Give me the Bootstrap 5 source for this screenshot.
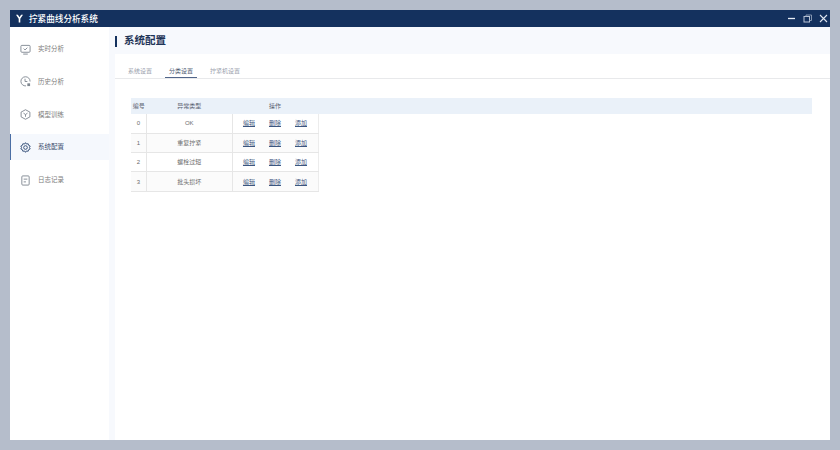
<!DOCTYPE html>
<html lang="zh"><head><meta charset="utf-8"><title>拧紧曲线分析系统</title>
<link rel="stylesheet" href="https://cdn.jsdelivr.net/npm/bootstrap@5.3.0/dist/css/bootstrap.min.css">
<style>
html,body{height:100%}
body{background:#b5bdcb;padding:10px;font-family:"Liberation Sans","Noto Sans CJK SC",sans-serif;overflow:hidden}
.app-win{width:820px;height:430px;background:#fff}
.app-title{height:17px;background:#14315e;color:#fff;font-size:8.6px;font-weight:500;padding:1px 0 0 5px}
.logo-y{margin-right:5px;margin-top:-1px}
.win-btn{width:13px;height:13px;display:block;margin-left:3px;margin-top:-1px}
.app-body{height:413px}
.side{width:99px;flex:none;padding-top:9px;gap:6.75px}
.side-item{height:26px;padding-left:9px;color:#7d7d7d;font-size:6.5px;gap:7px;border-left:1px solid transparent}
.side-item svg{width:11px;height:11px;flex:none;color:#7f8790}
.side-item.on{background:#f5f8fd;border-left-color:#4a6ea4;color:#3c4f70}
.side-item.on svg{color:#2f4a75}
.main-area{background:#f7f9fd;padding-left:6px;min-width:0}
.page-head{height:27px;font-size:10.5px;font-weight:700;color:#1f3558;gap:7px;padding-top:1px}
.head-bar{width:2px;height:11px;background:#14315e}
.panel{background:#fff}
.tabs-row{height:25px;border-bottom:1px solid #e8e9eb;padding-left:9px}
.tab-it{font-size:6px;color:#9aa1ad;padding:11px 4px 0;line-height:12px;height:24px;margin-right:9px;text-decoration:none}
.tab-it.on{color:#4b5870;border-bottom:1px solid #51658a}
.tbl-wrap{padding:19px 19px 0 16px}
.cat-tbl{table-layout:fixed;width:681px;border-collapse:collapse;font-size:6px;color:#6c6c6c;margin:0;text-align:center}
.cat-tbl th{background:#eaf1f9;font-weight:400;height:16px;padding:0;color:#5b6270}
.cat-tbl td{height:19.3px;padding:1px 0 0;border-bottom:1px solid #e6e6e6;vertical-align:middle}
.cat-tbl td.c1,.cat-tbl td.c2{border-right:1px solid #e6e6e6}
.cat-tbl td.c3{border-right:1px solid #ececec}
.cat-tbl tr.alt td.c1,.cat-tbl tr.alt td.c2,.cat-tbl tr.alt td.c3{background:#fbfbfb}
.cat-tbl td.c4{border:0;background:#fff}
.op-links{gap:14px}
.op-links a{color:#3c5680;text-decoration:underline}
</style></head>
<body>
<div class="app-win d-flex flex-column">
  <div class="app-title d-flex align-items-center">
    <svg class="logo-y" width="9" height="9" viewBox="0 0 9 9"><path d="M1 0.8 L2.9 0.8 L4.5 3.2 L6.1 0.8 L8 0.8 L5.3 4.8 L5.3 8.5 L3.7 8.5 L3.7 4.8Z" fill="#fff"/></svg>
    <span>拧紧曲线分析系统</span>
    <div class="ms-auto d-flex align-items-center">
      <svg class="win-btn" viewBox="0 0 13 13"><path d="M3 6.5H10" stroke="#e8edf5" stroke-width="1.3"/></svg>
      <svg class="win-btn" viewBox="0 0 13 13"><rect x="3" y="4.5" width="5.5" height="5.5" fill="none" stroke="#b9c4d6" stroke-width="1"/><path d="M5 4.5V3H10.5V8.5H8.5" fill="none" stroke="#8596b0" stroke-width="1"/></svg>
      <svg class="win-btn" viewBox="0 0 13 13"><path d="M3 3L10 10M10 3L3 10" stroke="#dfe5ef" stroke-width="1.1"/></svg>
    </div>
  </div>
  <div class="app-body d-flex">
    <nav class="side d-flex flex-column">
      <div class="side-item d-flex align-items-center">
        <svg viewBox="0 0 12 12" fill="none" stroke="currentColor"><rect x="1" y="1.5" width="10" height="7.5" rx="1"/><path d="M3.5 11H8.5"/><path d="M4 5L5.5 6.5L8 4"/></svg><span>实时分析</span></div>
      <div class="side-item d-flex align-items-center">
        <svg viewBox="0 0 12 12" fill="none" stroke="currentColor"><path d="M6.5 10.8A5 5 0 1 1 11 6"/><path d="M5.5 3V6H8"/><rect x="8" y="8" width="3" height="3" fill="currentColor" stroke="none"/></svg><span>历史分析</span></div>
      <div class="side-item d-flex align-items-center">
        <svg viewBox="0 0 12 12" fill="none" stroke="currentColor"><path d="M6 .8L10.8 3.4V8.6L6 11.2L1.2 8.6V3.4Z"/><path d="M3.8 4.5L6 6L8.2 4.5M6 6V8.5"/></svg><span>模型训练</span></div>
      <div class="side-item on d-flex align-items-center">
        <svg viewBox="0 0 12 12" fill="none" stroke="currentColor"><path d="M6 .7L7 2.2L8.9 1.9L9.4 3.6L11.1 4.4L10.3 6L11.1 7.6L9.4 8.4L8.9 10.1L7 9.8L6 11.3L5 9.8L3.1 10.1L2.6 8.4L.9 7.6L1.7 6L.9 4.4L2.6 3.6L3.1 1.9L5 2.2Z"/><circle cx="6" cy="6" r="2"/></svg><span>系统配置</span></div>
      <div class="side-item d-flex align-items-center">
        <svg viewBox="0 0 12 12" fill="none" stroke="currentColor"><rect x="2" y="1" width="8" height="10" rx="1"/><path d="M4 4.5H8M4 7.5H6.5"/></svg><span>日志记录</span></div>
    </nav>
    <main class="main-area flex-grow-1 d-flex flex-column">
      <div class="page-head d-flex align-items-center"><span class="head-bar"></span><span>系统配置</span></div>
      <section class="panel flex-grow-1">
        <div class="tabs-row d-flex">
          <a class="tab-it">系统设置</a>
          <a class="tab-it on">分类设置</a>
          <a class="tab-it">拧紧机设置</a>
        </div>
        <div class="tbl-wrap">
          <table class="cat-tbl">
            <colgroup><col style="width:15.5px"><col style="width:85.5px"><col style="width:86px"><col></colgroup>
            <thead><tr><th>编号</th><th>异常类型</th><th>操作</th><th></th></tr></thead>
            <tbody>
              <tr><td class="c1">0</td><td class="c2">OK</td><td class="c3"><div class="op-links d-flex justify-content-center"><a href="#">编辑</a><a href="#">删除</a><a href="#">添加</a></div></td><td class="c4"></td></tr>
              <tr class="alt"><td class="c1">1</td><td class="c2">重复拧紧</td><td class="c3"><div class="op-links d-flex justify-content-center"><a href="#">编辑</a><a href="#">删除</a><a href="#">添加</a></div></td><td class="c4"></td></tr>
              <tr><td class="c1">2</td><td class="c2">螺栓过短</td><td class="c3"><div class="op-links d-flex justify-content-center"><a href="#">编辑</a><a href="#">删除</a><a href="#">添加</a></div></td><td class="c4"></td></tr>
              <tr class="alt"><td class="c1">3</td><td class="c2">批头损坏</td><td class="c3"><div class="op-links d-flex justify-content-center"><a href="#">编辑</a><a href="#">删除</a><a href="#">添加</a></div></td><td class="c4"></td></tr>
            </tbody>
          </table>
        </div>
      </section>
    </main>
  </div>
</div>
<script src="https://cdn.jsdelivr.net/npm/bootstrap@5.3.0/dist/js/bootstrap.bundle.min.js"></script>
</body></html>
